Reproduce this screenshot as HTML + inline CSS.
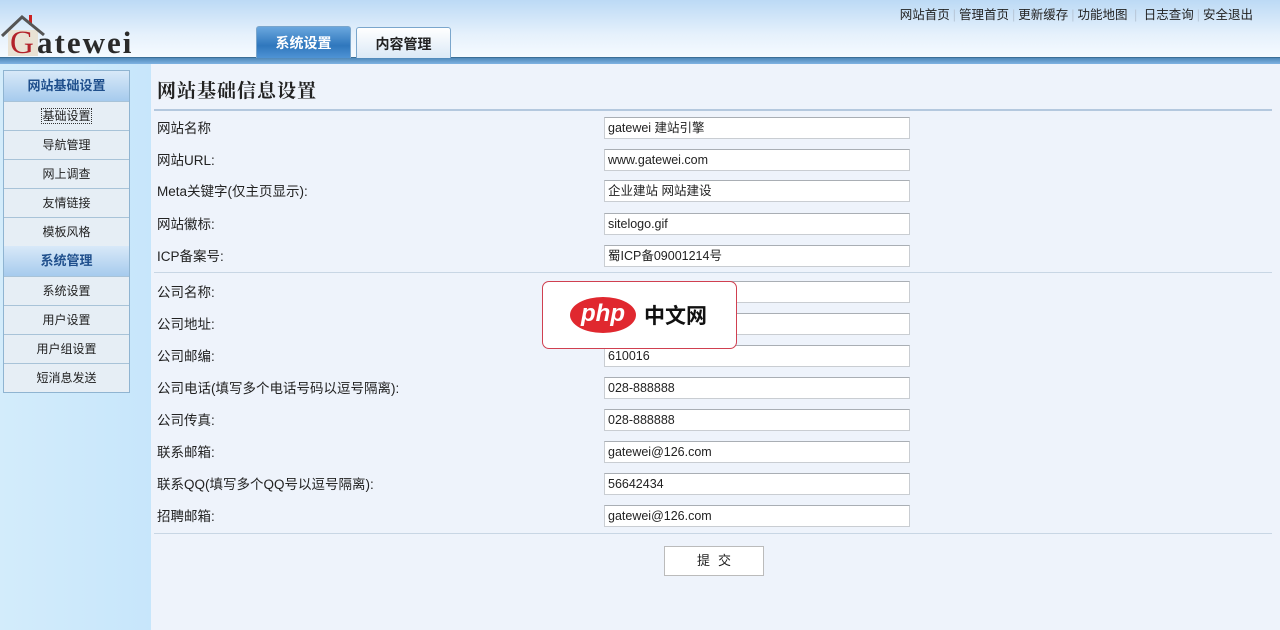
<!DOCTYPE html>
<html><head><meta charset="utf-8"><style>
*{margin:0;padding:0;box-sizing:border-box}
body{width:1280px;height:630px;overflow:hidden;background:#eef3fb;font-family:"Liberation Sans","Noto Sans CJK SC",sans-serif;font-size:13px;color:#222;position:relative}
#hd{position:absolute;left:0;top:0;width:1280px;height:58px;background:linear-gradient(#bcdaf5,#e6f1fc 60%,#f6fbff)}
#bar{position:absolute;left:0;top:57px;width:1280px;height:7px;background:linear-gradient(#4f88b8,#7fb3e3);border-top:1px solid #3b6f96}
#logo{position:absolute;left:0;top:0;width:150px;height:57px}
#logo svg{position:absolute;left:0;top:0}
#logo .g{position:absolute;left:10px;top:26px;font-family:"Liberation Serif",serif;font-size:33px;color:#b3222a;line-height:34px}
#logo .r{position:absolute;left:37px;top:26px;font-family:"Liberation Serif",serif;font-size:31px;font-weight:bold;letter-spacing:2px;color:#2a2a2a;line-height:34px}
.tab{position:absolute;top:27px;height:31px;border:1px solid #7aa6cc;border-bottom:none;border-radius:3px 3px 0 0;font-weight:bold;font-size:14px;text-align:center;line-height:32px}
#t1{left:256px;width:95px;background:linear-gradient(#6aa7de,#2f77bd 60%,#4f93d4);color:#fff;top:26px;height:32px}
#t2{left:356px;width:95px;background:linear-gradient(#fff,#dbe9f6);color:#222}
#links{position:absolute;right:27px;top:4px;font-size:12.5px;color:#222}
#links i{color:#b8c8d8;font-style:normal;margin:0 3px}
#side{position:absolute;left:0;top:64px;width:151px;height:566px;background:linear-gradient(90deg,#d3ecfb,#c7e6fb)}
.m{position:absolute;left:3px;width:127px;border:1px solid #8fb4d1;background:#e6eef5}
.m div{height:29px;line-height:29px;text-align:center;border-top:1px solid #a8c3d8;font-size:12px}
.m .h{height:30px;line-height:30px;border-top:none;font-weight:bold;color:#1f4f8c;font-size:13px;background:linear-gradient(#d8e9f8,#a6cbed)}
#title{position:absolute;left:157px;top:76px;font-size:19px;font-weight:bold;letter-spacing:1px;font-family:"Liberation Serif","Noto Serif CJK SC",serif}
.sep{position:absolute;left:154px;width:1118px;height:1px;background:#c8d6e4}
.lb{position:absolute;left:157px;font-size:13.5px;margin-top:-2px}
.in{position:absolute;left:604px;width:306px;height:22px;background:#fff;border:1px solid #c9cdd2;border-top-color:#a9aeb4;padding-left:3px;line-height:20px;font-size:12.5px}
#btn{position:absolute;left:664px;top:546px;width:100px;height:30px;background:#fff;border:1px solid #bbb;text-align:center;line-height:28px;letter-spacing:8px;padding-left:8px}
#php{position:absolute;left:542px;top:281px;width:195px;height:68px;background:#fff;border:1px solid #d04050;border-radius:7px}
#php .e{position:absolute;left:27px;top:15px;width:66px;height:36px;border-radius:50%;background:#e0282f;color:#fff;font-weight:bold;font-style:italic;font-size:24px;text-align:center;line-height:33px}
#php .c{position:absolute;left:101px;top:18px;font-size:21px;font-weight:bold;color:#111}
</style></head><body>
<div id="hd"></div><div id="bar"></div>
<div id="logo">
<svg width="50" height="58" viewBox="0 0 50 58"><rect x="8" y="30" width="30" height="26" fill="#e9e2d4"/><rect x="29" y="15" width="3" height="10" fill="#c22"/><path d="M2 36 L22 17 L44 35" fill="none" stroke="#555" stroke-width="3"/></svg>
<span class="g">G</span><span class="r">atewei</span></div>
<div class="tab" id="t1">系统设置</div><div class="tab" id="t2">内容管理</div>
<div id="links">网站首页<i>|</i>管理首页<i>|</i>更新缓存<i>|</i>功能地图 <i>|</i> 日志查询<i>|</i>安全退出</div>
<div id="side">
<div class="m" style="top:6px"><div class="h">网站基础设置</div><div><u style="text-decoration:none;outline:1px dotted #333">基础设置</u></div><div>导航管理</div><div>网上调查</div><div>友情链接</div><div>模板风格</div></div>
<div class="m" style="top:182px;border-top:none"><div class="h">系统管理</div><div>系统设置</div><div>用户设置</div><div>用户组设置</div><div>短消息发送</div></div>
</div>
<div id="title">网站基础信息设置</div>
<div class="sep" style="top:109px;height:2px;background:#b4c8de"></div>
<div class="lb" style="top:119px">网站名称</div><div class="in" style="top:117px">gatewei 建站引擎</div>
<div class="lb" style="top:151px">网站URL:</div><div class="in" style="top:149px">www.gatewei.com</div>
<div class="lb" style="top:182px">Meta关键字(仅主页显示):</div><div class="in" style="top:180px">企业建站 网站建设</div>
<div class="lb" style="top:215px">网站徽标:</div><div class="in" style="top:213px">sitelogo.gif</div>
<div class="lb" style="top:247px">ICP备案号:</div><div class="in" style="top:245px">蜀ICP备09001214号</div>
<div class="sep" style="top:272px"></div>
<div class="lb" style="top:283px">公司名称:</div><div class="in" style="top:281px"></div>
<div class="lb" style="top:315px">公司地址:</div><div class="in" style="top:313px"></div>
<div class="lb" style="top:347px">公司邮编:</div><div class="in" style="top:345px">610016</div>
<div class="lb" style="top:379px">公司电话(填写多个电话号码以逗号隔离):</div><div class="in" style="top:377px">028-888888</div>
<div class="lb" style="top:411px">公司传真:</div><div class="in" style="top:409px">028-888888</div>
<div class="lb" style="top:443px">联系邮箱:</div><div class="in" style="top:441px">gatewei@126.com</div>
<div class="lb" style="top:475px">联系QQ(填写多个QQ号以逗号隔离):</div><div class="in" style="top:473px">56642434</div>
<div class="lb" style="top:507px">招聘邮箱:</div><div class="in" style="top:505px">gatewei@126.com</div>
<div class="sep" style="top:533px"></div>
<div id="btn">提交</div>
<div id="php"><div class="e">php</div><div class="c">中文网</div></div>
</body></html>
